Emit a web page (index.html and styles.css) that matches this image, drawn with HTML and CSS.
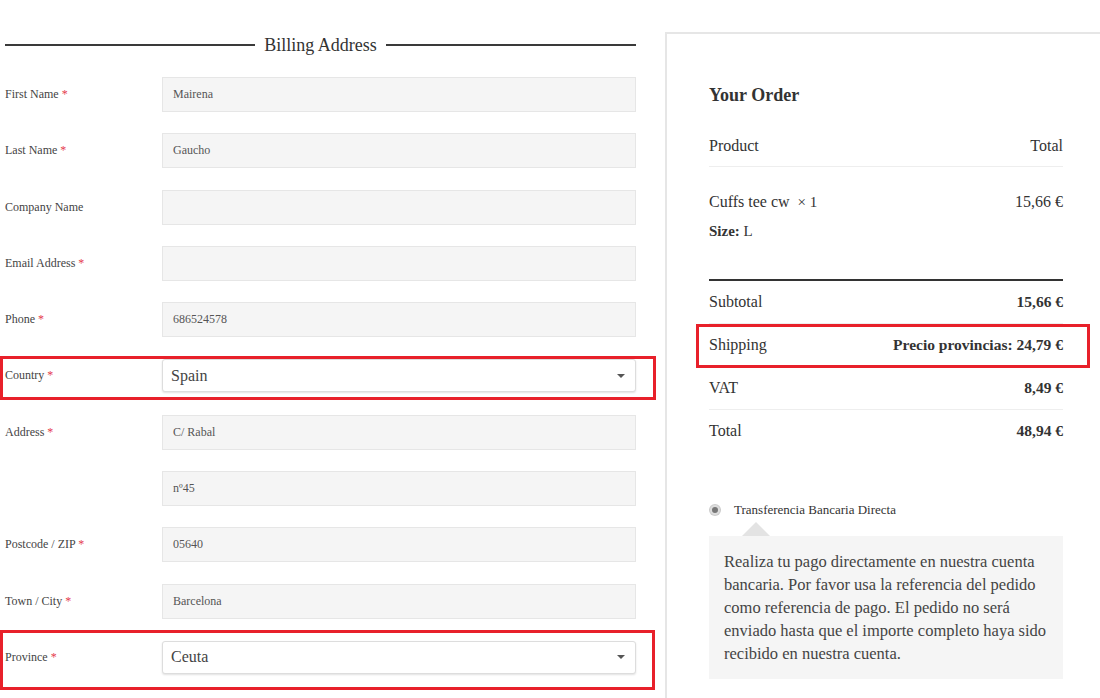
FILE: index.html
```html
<!DOCTYPE html>
<html lang="en">
<head>
  <meta charset="UTF-8">
  <meta name="viewport" content="width=device-width, initial-scale=1.0">
  <title>Checkout</title>
  <link rel="stylesheet" href="styles.css">
</head>
<body>
  <div class="page">
    <div class="billing">
      <div class="heading">
        <span class="rule"></span>
        <h3>Billing Address</h3>
        <span class="rule"></span>
      </div>

      <div class="row">
        <label>First Name <abbr>*</abbr></label>
        <div class="field">Mairena</div>
      </div>
      <div class="row">
        <label>Last Name <abbr>*</abbr></label>
        <div class="field">Gaucho</div>
      </div>
      <div class="row">
        <label>Company Name</label>
        <div class="field"></div>
      </div>
      <div class="row">
        <label>Email Address <abbr>*</abbr></label>
        <div class="field"></div>
      </div>
      <div class="row">
        <label>Phone <abbr>*</abbr></label>
        <div class="field">686524578</div>
      </div>
      <div class="row marked">
        <label>Country <abbr>*</abbr></label>
        <div class="select">Spain <span class="caret"></span></div>
        <span class="highlight hl-country"></span>
      </div>
      <div class="row">
        <label>Address <abbr>*</abbr></label>
        <div class="field">C/ Rabal</div>
      </div>
      <div class="row">
        <label></label>
        <div class="field">nº45</div>
      </div>
      <div class="row">
        <label>Postcode / ZIP <abbr>*</abbr></label>
        <div class="field">05640</div>
      </div>
      <div class="row">
        <label>Town / City <abbr>*</abbr></label>
        <div class="field">Barcelona</div>
      </div>
      <div class="row marked">
        <label>Province <abbr>*</abbr></label>
        <div class="select">Ceuta <span class="caret"></span></div>
        <span class="highlight hl-province"></span>
      </div>
    </div>

    <div class="order">
      <h3>Your Order</h3>
      <div class="line head">
        <span>Product</span>
        <span>Total</span>
      </div>
      <div class="item">
        <div class="line">
          <span>Cuffs tee cw &nbsp;<span class="qty">× 1</span></span>
          <span>15,66 €</span>
        </div>
        <div class="size"><b>Size:</b> L</div>
      </div>
      <div class="totals">
        <div class="line">
          <span>Subtotal</span>
          <b>15,66 €</b>
        </div>
        <div class="line marked">
          <span>Shipping</span>
          <b>Precio provincias: 24,79 €</b>
          <span class="highlight hl-shipping"></span>
        </div>
        <div class="line">
          <span>VAT</span>
          <b>8,49 €</b>
        </div>
        <div class="line">
          <span>Total</span>
          <b>48,94 €</b>
        </div>
      </div>

      <div class="payment">
        <div class="method">
          <span class="radio"></span>
          <span>Transferencia Bancaria Directa</span>
        </div>
        <div class="desc">
          Realiza tu pago directamente en nuestra cuenta bancaria. Por favor usa la referencia del pedido como referencia de pago. El pedido no será enviado hasta que el importe completo haya sido recibido en nuestra cuenta.
        </div>
      </div>
    </div>
  </div>
</body>
</html>
```

FILE: styles.css
```css
body {
  font-family: "Liberation Serif", "Times New Roman", serif;
  color: #333;
  background-color: #fff;
  margin: 0;
  padding: 0;
  overflow: hidden;
}

.page {
  display: flex;
  align-items: flex-start;
  width: 1130px;
}

/* left column */

.billing {
  width: 631px;
  padding-left: 5px;
  margin-right: 29px;
}

.heading {
  display: flex;
  align-items: center;
  height: 24px;
  margin-top: 33px;
  margin-bottom: 20px;
}

.heading .rule {
  flex: 1;
  height: 2px;
  background-color: #3a3a3a;
}

.heading h3 {
  margin: 0 9px;
  font-size: 18px;
  font-weight: normal;
  color: #333;
}

.row {
  position: relative;
  display: flex;
  align-items: center;
  height: 35px;
  margin-bottom: 21.3px;
}

.row label {
  width: 157px;
  font-size: 12px;
  color: #444;
}

.row abbr {
  color: #e5394d;
  text-decoration: none;
}

.field {
  flex: 1;
  height: 33px;
  line-height: 33px;
  padding: 0 10px;
  font-size: 12px;
  color: #555;
  background-color: #f5f5f5;
  border: 1px solid #e6e6e6;
}

.select {
  flex: 1;
  display: flex;
  justify-content: space-between;
  align-items: center;
  height: 31px;
  padding: 0 10px 0 8px;
  font-size: 16px;
  color: #444;
  background-color: #fff;
  border: 1px solid #ddd;
  border-radius: 3px;
  box-shadow: 0 1px 2px rgba(0, 0, 0, 0.12);
}

.caret {
  width: 0;
  height: 0;
  border-left: 4px solid transparent;
  border-right: 4px solid transparent;
  border-top: 4px solid #555;
}

/* red annotation boxes */

.highlight {
  position: absolute;
  border: 3px solid #e8202a;
  pointer-events: none;
}

.hl-country {
  left: -5px;
  top: -2px;
  width: 650px;
  height: 38px;
}

.hl-province {
  left: -5px;
  top: -10px;
  width: 649px;
  height: 54px;
}

.hl-shipping {
  left: -13px;
  top: 0;
  width: 388px;
  height: 38px;
}

/* right column */

.order {
  width: 398px;
  padding: 0 0 40px 42px;
  margin-top: 32px;
  border-top: 2px solid #e6e6e6;
  border-left: 2px solid #e6e6e6;
  min-height: 700px;
}

.order > * {
  width: 354px;
}

.order h3 {
  margin: 51px 0 0;
  font-size: 18px;
  font-weight: bold;
  color: #333;
}

.line {
  position: relative;
  display: flex;
  justify-content: space-between;
  align-items: center;
  font-size: 16px;
  color: #333;
}

.line.head {
  height: 40px;
  margin-top: 20px;
  border-bottom: 1px solid #eee;
}

.item {
  padding-top: 21px;
  height: 91px;
  border-bottom: 2px solid #333;
}

.item .line {
  height: 28px;
}

.qty {
  font-size: 15px;
}

.size {
  margin-top: 7px;
  font-size: 15px;
}

.totals .line {
  height: 42px;
  border-bottom: 1px solid #eee;
}

.totals .line:last-child {
  border-bottom: none;
}

.totals b {
  font-size: 15.5px;
}

.payment {
  margin-top: 48px;
}

.method {
  display: flex;
  align-items: center;
  height: 20px;
  padding-left: 1px;
  font-size: 13px;
  color: #333;
}

.radio {
  width: 6px;
  height: 6px;
  margin-right: 14px;
  background-color: #777;
  border: 2px solid #ddd;
  border-radius: 50%;
  box-shadow: 0 0 0 1px #ccc;
}

.desc {
  position: relative;
  margin-top: 16px;
  padding: 14px 15px;
  font-size: 16.5px;
  line-height: 23px;
  color: #444;
  background-color: #f5f5f5;
}

.desc::before {
  content: "";
  position: absolute;
  left: 33px;
  top: -14px;
  border-left: 14px solid transparent;
  border-right: 14px solid transparent;
  border-bottom: 14px solid #e3e3e3;
}
```
